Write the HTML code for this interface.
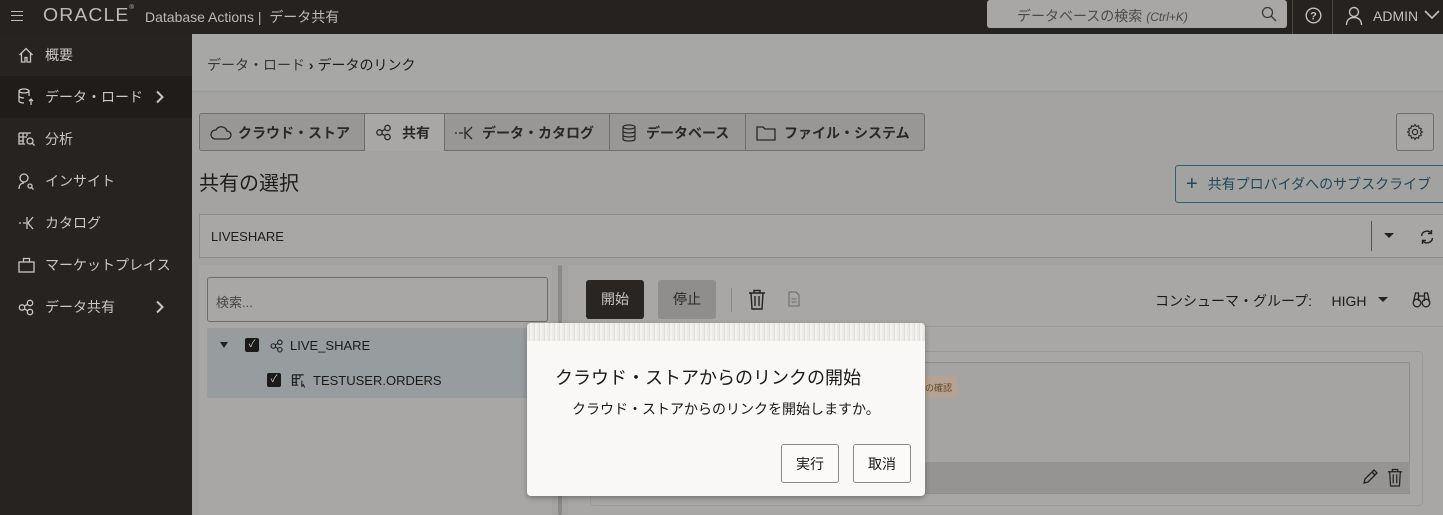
<!DOCTYPE html>
<html><head><meta charset="utf-8"><style>
*{box-sizing:border-box;margin:0;padding:0}
body{width:1443px;height:515px;overflow:hidden;position:relative;font-family:"Liberation Sans","Noto Sans CJK JP",sans-serif;background:#a4a3a1;color:#1a1816}
.abs{position:absolute}
.top{left:0;top:0;width:1443px;height:34px;background:#252220;color:#bdbab6}
.side{left:0;top:34px;width:192px;height:481px;background:#272321;color:#c9c6c2}
.si{position:absolute;left:0;width:192px;height:42px;display:flex;align-items:center;padding-left:45px;font-size:14px}
.si svg{position:absolute;left:18px}
.si svg.chev{left:155px}
.tab{position:absolute;top:0;height:37px;display:flex;align-items:center;font-size:14px;font-weight:bold;color:#2a2826;border-right:1px solid #6e6d6b}
.btn{position:absolute;border:1px solid #6f6e6c;border-radius:3px;display:flex;align-items:center;justify-content:center;font-size:14px}
</style></head><body>
<div class="abs top">
 <div class="abs" style="left:11px;top:11px;width:12px;height:10px;border-top:1.5px solid #bbb;border-bottom:1.5px solid #bbb"><div style="margin-top:3px;border-top:1.5px solid #bbb"></div></div>
 <div class="abs" style="left:43px;top:5px;font-size:18px;letter-spacing:1px;color:#bdbab6;transform:scaleX(1.08);transform-origin:left;white-space:nowrap">ORACLE<span style="font-size:6px;vertical-align:top;letter-spacing:0">®</span></div>
 <div class="abs" style="left:145px;top:7px;font-size:14px">Database Actions |&nbsp; データ共有</div>
 <div class="abs" style="left:987px;top:0;width:300px;height:28px;background:#a8a7a5;border-radius:3px;color:#4d4b49;font-size:14px;padding:6px 0 0 30px">データベースの検索 <i style="font-size:12px">(Ctrl+K)</i>
  <svg class="abs" style="left:274px;top:6px" width="16" height="16" viewBox="0 0 16 16"><circle cx="6.5" cy="6.5" r="5" fill="none" stroke="#3c3a38" stroke-width="1.3"/><path d="M10 10l5 5" stroke="#3c3a38" stroke-width="1.3"/></svg></div>
 <div class="abs" style="left:1292px;top:0;width:1px;height:34px;background:#4a4643"></div>
 <div class="abs" style="left:1332px;top:0;width:1px;height:34px;background:#4a4643"></div>
 <svg class="abs" style="left:1305px;top:7px" width="17" height="17" viewBox="0 0 17 17"><circle cx="8.5" cy="8.5" r="7.3" fill="none" stroke="#c4c1bd" stroke-width="1.4"/><text x="8.5" y="12.5" font-size="11" font-weight="bold" text-anchor="middle" fill="#c4c1bd" font-family="Liberation Sans">?</text></svg>
 <svg class="abs" style="left:1345px;top:6px" width="18" height="20" viewBox="0 0 18 20"><circle cx="9" cy="6" r="4.5" fill="none" stroke="#c4c1bd" stroke-width="1.4"/><path d="M1.5 19c0-5 3-7.5 7.5-7.5s7.5 2.5 7.5 7.5" fill="none" stroke="#c4c1bd" stroke-width="1.4"/></svg>
 <div class="abs" style="left:1373px;top:8px;font-size:14px;color:#c4c1bd">ADMIN</div>
 <svg class="abs" style="left:1424px;top:10px" width="16" height="10"><path d="M1 1l7 7 7-7" fill="none" stroke="#c4c1bd" stroke-width="1.6"/></svg>
</div>
<div class="abs side">
 <div class="si" style="top:0"><svg width="16" height="16" viewBox="0 0 16 16"><path d="M1.5 8L8 1.5 14.5 8M3.5 6.5V15h3.5v-4.5h2V15h3.5V6.5" fill="none" stroke="#c9c6c2" stroke-width="1.3"/></svg>概要</div>
 <div class="si" style="top:42px;background:#1f1c1a"><svg width="16" height="18" viewBox="0 0 16 18"><ellipse cx="6" cy="3" rx="5" ry="2" fill="none" stroke="#c9c6c2" stroke-width="1.3"/><path d="M1 3v10c0 1 2 2 5 2M11 3v5M1 8c0 1 2 2 5 2M13 17v-6M11 13l2-2 2 2" fill="none" stroke="#c9c6c2" stroke-width="1.3"/></svg>データ・ロード<svg class="chev" width="9" height="14" viewBox="0 0 9 14"><path d="M2 1.5l5.5 5.5L2 12.5" fill="none" stroke="#c9c6c2" stroke-width="2"/></svg></div>
 <div class="si" style="top:84px"><svg width="17" height="16" viewBox="0 0 17 16"><path d="M1 2h12M1 2v11h6M1 6h8M1 10h5M5 2v11M9 2v3" fill="none" stroke="#c9c6c2" stroke-width="1.3"/><circle cx="12" cy="10" r="3" fill="none" stroke="#c9c6c2" stroke-width="1.3"/><path d="M14 12l2.5 2.5" stroke="#c9c6c2" stroke-width="1.3"/></svg>分析</div>
 <div class="si" style="top:126px"><svg width="17" height="17" viewBox="0 0 17 17"><circle cx="6" cy="5" r="4" fill="none" stroke="#c9c6c2" stroke-width="1.3"/><path d="M1 16c0-4 2-6 5-6" fill="none" stroke="#c9c6c2" stroke-width="1.3"/><circle cx="12" cy="13" r="2" fill="none" stroke="#c9c6c2" stroke-width="1.3"/><path d="M13.5 14.5l2 2" stroke="#c9c6c2" stroke-width="1.3"/></svg>インサイト</div>
 <div class="si" style="top:168px"><svg width="17" height="16" viewBox="0 0 17 16"><path d="M1 8h2M5 8h3M9 2v12M15 2L10 8l5 6" fill="none" stroke="#c9c6c2" stroke-width="1.3"/></svg>カタログ</div>
 <div class="si" style="top:210px"><svg width="17" height="16" viewBox="0 0 17 16"><rect x="1" y="5" width="15" height="10" fill="none" stroke="#c9c6c2" stroke-width="1.3"/><path d="M5.5 5V1.5h6V5" fill="none" stroke="#c9c6c2" stroke-width="1.3"/></svg>マーケットプレイス</div>
 <div class="si" style="top:252px"><svg width="17" height="17" viewBox="0 0 17 17"><circle cx="4" cy="8.5" r="2.7" fill="none" stroke="#c9c6c2" stroke-width="1.3"/><circle cx="12" cy="4" r="2.7" fill="none" stroke="#c9c6c2" stroke-width="1.3"/><circle cx="12" cy="13" r="2.7" fill="none" stroke="#c9c6c2" stroke-width="1.3"/><path d="M6.3 7.2l3.4-2M6.3 9.8l3.4 2" stroke="#c9c6c2" stroke-width="1.3"/></svg>データ共有<svg class="chev" width="9" height="14" viewBox="0 0 9 14"><path d="M2 1.5l5.5 5.5L2 12.5" fill="none" stroke="#c9c6c2" stroke-width="2"/></svg></div>
</div>
<!-- main -->
<div class="abs" style="left:192px;top:34px;width:1251px;height:58px;background:#a7a7a6;border-bottom:1px solid #9c9b99"></div>
<div class="abs" style="left:207px;top:55px;font-size:14px;color:#3a3836">データ・ロード <b style="color:#222">›</b> <span style="color:#1e1c1a">データのリンク</span></div>
<div class="abs" style="left:199px;top:113px;width:726px;height:38px;background:#989795;border:1px solid #6f6e6c;border-radius:3px">
 <div class="tab" style="left:0;width:165px;padding-left:38px"><svg class="abs" style="left:10px;top:11px" width="22" height="15" viewBox="0 0 22 15"><path d="M5 14h12a4 4 0 000-8 6 6 0 00-11-1 4.5 4.5 0 00-1 9z" fill="none" stroke="#2a2826" stroke-width="1.3"/></svg>クラウド・ストア</div>
 <div class="tab" style="left:165px;width:80px;background:#a8a7a6;padding-left:37px"><svg class="abs" style="left:10px;top:10px" width="18" height="17" viewBox="0 0 17 17"><circle cx="4" cy="8.5" r="2.7" fill="none" stroke="#2a2826" stroke-width="1.3"/><circle cx="12" cy="4" r="2.7" fill="none" stroke="#2a2826" stroke-width="1.3"/><circle cx="12" cy="13" r="2.7" fill="none" stroke="#2a2826" stroke-width="1.3"/><path d="M6.3 7.2l3.4-2M6.3 9.8l3.4 2" stroke="#2a2826" stroke-width="1.3"/></svg>共有</div>
 <div class="tab" style="left:245px;width:165px;padding-left:37px"><svg class="abs" style="left:9px;top:11px" width="20" height="16" viewBox="0 0 20 16"><path d="M1 8h2M5 8h4M11 2v12M18 2l-6 6 6 6" fill="none" stroke="#2a2826" stroke-width="1.3"/></svg>データ・カタログ</div>
 <div class="tab" style="left:410px;width:136px;padding-left:36px"><svg class="abs" style="left:12px;top:10px" width="14" height="18" viewBox="0 0 14 18"><ellipse cx="7" cy="3" rx="6" ry="2" fill="none" stroke="#2a2826" stroke-width="1.2"/><path d="M1 3v12c0 1.2 2.7 2 6 2s6-.8 6-2V3M1 7c0 1.2 2.7 2 6 2s6-.8 6-2M1 11c0 1.2 2.7 2 6 2s6-.8 6-2" fill="none" stroke="#2a2826" stroke-width="1.2"/></svg>データベース</div>
 <div class="tab" style="left:546px;width:178px;padding-left:38px;border-right:none"><svg class="abs" style="left:10px;top:11px" width="20" height="16" viewBox="0 0 20 16"><path d="M1 2h6l2 2h10v11H1z" fill="none" stroke="#2a2826" stroke-width="1.3"/></svg>ファイル・システム</div>
</div>
<div class="btn" style="left:1396px;top:113px;width:38px;height:38px;background:#a6a5a4"><svg width="18" height="18" viewBox="0 0 18 18"><circle cx="9" cy="9" r="2.6" fill="none" stroke="#2a2826" stroke-width="1.2"/><path d="M9 1.5l1.3 2 2.3-.8.3 2.4 2.4.4-.8 2.3 2 1.2-2 1.3.8 2.3-2.4.3-.3 2.4-2.3-.8L9 16.5l-1.3-2-2.3.8-.3-2.4-2.4-.3.8-2.3-2-1.3 2-1.2-.8-2.3 2.4-.4.3-2.4 2.3.8z" fill="none" stroke="#2a2826" stroke-width="1.1"/></svg></div>
<div class="abs" style="left:199px;top:167px;font-size:20px;color:#1e1c1a">共有の選択</div>
<div class="btn" style="left:1175px;top:165px;width:275px;height:38px;border-color:#2c5f70;color:#20485a;justify-content:flex-start;padding-left:10px;background:#a2a2a1"><span style="font-size:20px;margin-right:10px;color:#20485a">+</span>共有プロバイダへのサブスクライブ</div>
<div class="abs" style="left:199px;top:214px;width:1244px;height:44px;background:#a8a7a6;border:1px solid #8e8d8b;border-right:none"></div>
<div class="abs" style="left:211px;top:229px;font-size:13px;color:#1e1c1a">LIVESHARE</div>
<div class="abs" style="left:1371px;top:221px;width:1px;height:30px;background:#555"></div>
<div class="abs" style="left:1384px;top:233px;border:5px solid transparent;border-top:5px solid #222;border-bottom:none"></div>
<svg class="abs" style="left:1419px;top:229px" width="16" height="16" viewBox="0 0 16 16"><path d="M2.5 7a5.5 5.5 0 0110-2.5M13.5 9a5.5 5.5 0 01-10 2.5" fill="none" stroke="#222" stroke-width="1.4"/><path d="M12.5 1v3.5H9M3.5 15v-3.5H7" fill="none" stroke="#222" stroke-width="1.4"/></svg>
<!-- left panel -->
<div class="abs" style="left:199px;top:265px;width:353px;height:250px;background:#a8a7a6"></div>
<div class="abs" style="left:558px;top:265px;width:4px;height:250px;background:#8a8988;border-radius:2px"></div>
<div class="abs" style="left:207px;top:277px;width:341px;height:45px;border:1px solid #6e6d6c;border-radius:3px;font-size:13px;color:#4a4846;padding:14px 0 0 8px">検索...</div>
<div class="abs" style="left:207px;top:328px;width:345px;height:70px;background:#979c9f"></div>
<div class="abs" style="left:220px;top:342px;border:4px solid transparent;border-top:6px solid #222;border-bottom:none"></div>
<div class="abs" style="left:245px;top:338px;width:14px;height:14px;background:#1c1a18;border-radius:2px;color:#ccc;font-size:10px;text-align:center;line-height:14px">✓</div>
<svg class="abs" style="left:270px;top:339px" width="14" height="14" viewBox="0 0 17 17"><circle cx="4" cy="8.5" r="2.7" fill="none" stroke="#222" stroke-width="1.3"/><circle cx="12" cy="4" r="2.7" fill="none" stroke="#222" stroke-width="1.3"/><circle cx="12" cy="13" r="2.7" fill="none" stroke="#222" stroke-width="1.3"/><path d="M6.3 7.2l3.4-2M6.3 9.8l3.4 2" stroke="#222" stroke-width="1.3"/></svg>
<div class="abs" style="left:290px;top:338px;font-size:13px;color:#1c1a18">LIVE_SHARE</div>
<div class="abs" style="left:267px;top:373px;width:14px;height:14px;background:#1c1a18;border-radius:2px;color:#ccc;font-size:10px;text-align:center;line-height:14px">✓</div>
<svg class="abs" style="left:291px;top:373px" width="17" height="15" viewBox="0 0 17 16"><path d="M1 2h12M1 2v11h6M1 6h8M1 10h5M5 2v11M9 2v3" fill="none" stroke="#222" stroke-width="1.3"/><path d="M11 8v6l1.5-1.5 1.5 3" fill="none" stroke="#222" stroke-width="1.2"/></svg>
<div class="abs" style="left:313px;top:373px;font-size:13px;color:#1c1a18">TESTUSER.ORDERS</div>
<!-- right panel -->
<div class="abs" style="left:568px;top:265px;width:875px;height:250px;background:#a8a7a6"></div>
<div class="abs" style="left:586px;top:280px;width:58px;height:39px;background:#282523;color:#c9c6c2;font-size:14px;border-radius:3px;text-align:center;line-height:39px">開始</div>
<div class="abs" style="left:658px;top:280px;width:58px;height:39px;background:#8f8e8d;color:#2a2826;font-size:14px;border-radius:3px;text-align:center;line-height:39px">停止</div>
<div class="abs" style="left:731px;top:288px;width:1px;height:24px;background:#8a8988"></div>
<svg class="abs" style="left:748px;top:289px" width="18" height="21" viewBox="0 0 18 21"><path d="M1 4h16M6 4V1.5h6V4M3 4l1 16h10l1-16M7 7v10M11 7v10" fill="none" stroke="#222" stroke-width="1.4"/></svg>
<svg class="abs" style="left:788px;top:291px" width="12" height="16" viewBox="0 0 12 16"><path d="M1 1h7l3 3v11H1zM3.5 8h5M3.5 11h5" fill="none" stroke="#6a6968" stroke-width="1"/></svg>
<div class="abs" style="left:1155px;top:291px;font-size:14px;color:#1e1c1a">コンシューマ・グループ: &nbsp;&nbsp;&nbsp; HIGH</div>
<div class="abs" style="left:1378px;top:297px;border:5px solid transparent;border-top:5px solid #222;border-bottom:none"></div>
<svg class="abs" style="left:1412px;top:291px" width="19" height="17" viewBox="0 0 19 17"><circle cx="5" cy="12" r="3.8" fill="none" stroke="#222" stroke-width="1.3"/><circle cx="14" cy="12" r="3.8" fill="none" stroke="#222" stroke-width="1.3"/><path d="M1.5 11l2-9h3v8M17.5 11l-2-9h-3v8M6.5 5h6" fill="none" stroke="#222" stroke-width="1.3"/></svg>
<div class="abs" style="left:568px;top:326px;width:875px;height:1px;background:#9a9998"></div>
<div class="abs" style="left:590px;top:351px;width:833px;height:155px;border:1px solid #999;border-radius:4px"></div>
<div class="abs" style="left:600px;top:362px;width:810px;height:132px;border:1px solid #8f8e8d;background:#a5a4a3"></div>
<div class="abs" style="left:600px;top:462px;width:810px;height:31px;background:#959493"></div>
<div class="abs" style="left:915px;top:376px;width:43px;height:22px;background:#b4a392;border-radius:5px;font-size:9px;color:#6a4a2a;padding:5px 0 0 10px">の確認</div>
<svg class="abs" style="left:1362px;top:469px" width="16" height="16" viewBox="0 0 16 16"><path d="M2 14l1-4 9-9 3 3-9 9zM10 3l3 3" fill="none" stroke="#222" stroke-width="1.3"/></svg>
<svg class="abs" style="left:1387px;top:468px" width="16" height="19" viewBox="0 0 18 21"><path d="M1 4h16M6 4V1.5h6V4M3 4l1 16h10l1-16M7 7v10M11 7v10" fill="none" stroke="#222" stroke-width="1.4"/></svg>
<!-- dialog -->
<div class="abs" style="left:527px;top:323px;width:398px;height:173px;background:#f9f8f6;border-radius:4px;box-shadow:0 2px 6px rgba(0,0,0,.3);overflow:hidden">
 <div style="height:18px;background:repeating-linear-gradient(90deg,#ecebe8 0 2px,#e0dfdc 2px 3px,#f3f2ef 3px 5px)"></div>
 <div class="abs" style="left:28px;top:41px;font-size:18px;color:#1c1a18">クラウド・ストアからのリンクの開始</div>
 <div class="abs" style="left:45px;top:76px;font-size:14px;color:#1c1a18">クラウド・ストアからのリンクを開始しますか。</div>
 <div class="btn" style="left:254px;top:121px;width:58px;height:39px;border-color:#8a8988;background:#fbfaf8">実行</div>
 <div class="btn" style="left:326px;top:121px;width:58px;height:39px;border-color:#8a8988;background:#fbfaf8">取消</div>
</div>
</body></html>
